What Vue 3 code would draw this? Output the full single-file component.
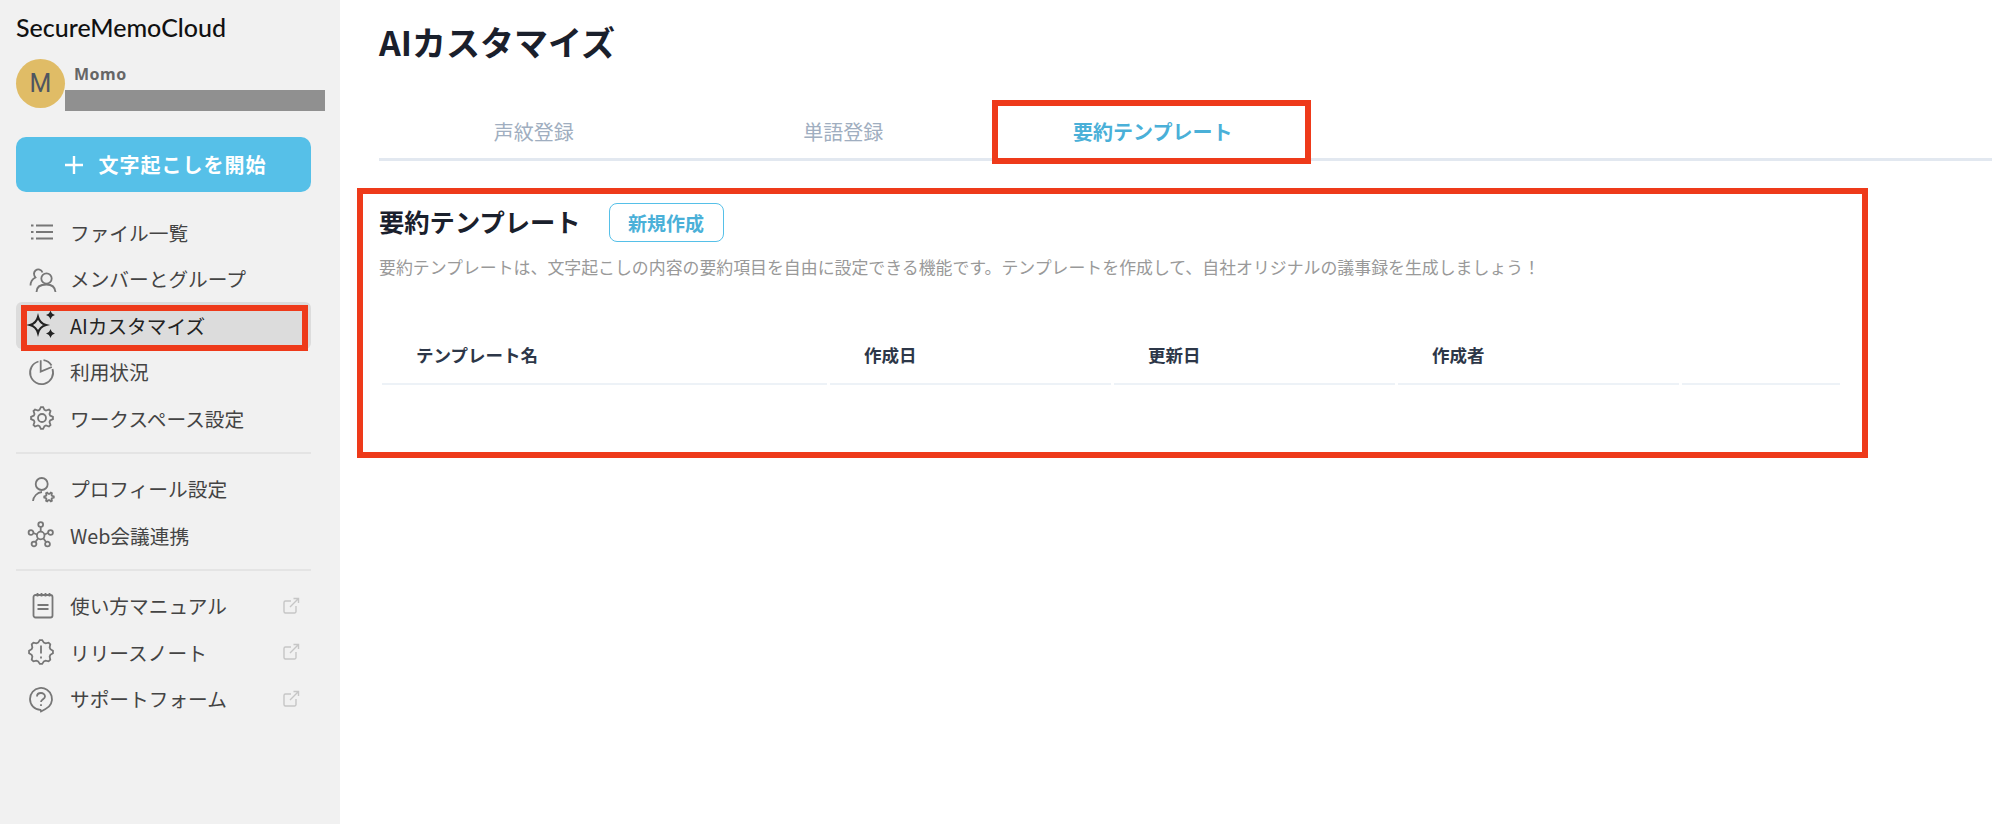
<template>
  <div class="page">
    <aside class="sidebar">
      <div class="logo">SecureMemoCloud</div>
      <div class="user">
        <div class="avatar">M</div>
        <div class="user-info">
          <div class="user-name">Momo</div>
          <div class="user-mail"></div>
        </div>
      </div>
      <button class="start-btn">
        <svg width="20" height="20" viewBox="0 0 20 20"><path d="M10 1v18M1 10h18" stroke="#fff" stroke-width="2.4" fill="none" /></svg>
        <span>文字起こしを開始</span>
      </button>

      <nav v-for="(group, i) in navGroups" :key="i" class="nav-group">
        <a v-for="item in group" :key="item.label" class="nav-item" :class="{ active: item.active }">
          <svg class="nav-icon" width="28" height="28" viewBox="0 0 28 28">
            <path v-for="d in item.icon" :key="d" :d="d" />
            <path v-for="d in item.dark || []" :key="d" :d="d" class="dark" />
            <path v-for="d in item.solid || []" :key="d" :d="d" class="solid" />
          </svg>
          <span class="nav-label">{{ item.label }}</span>
          <svg v-if="item.external" class="ext-icon" width="18" height="18" viewBox="0 0 18 18">
            <path d="M9 4H3.500A1.500 1.500 0 0 0 2 5.500V14.500A1.500 1.500 0 0 0 3.500 16H12.500A1.500 1.500 0 0 0 14 14.500V9M8 10L16.500 1.500M11.500 1.500H16.500V6" />
          </svg>
        </a>
      </nav>
    </aside>

    <main class="main">
      <h1 class="title">AIカスタマイズ</h1>

      <div class="tabs">
        <div v-for="tab in tabs" :key="tab" class="tab" :class="{ current: tab === currentTab }">{{ tab }}</div>
      </div>

      <section class="panel">
        <div class="panel-head">
          <h2>要約テンプレート</h2>
          <button class="new-btn">新規作成</button>
        </div>
        <p class="desc">要約テンプレートは、文字起こしの内容の要約項目を自由に設定できる機能です。テンプレートを作成して、自社オリジナルの議事録を生成しましょう！</p>
        <div class="table-head">
          <div v-for="col in columns" :key="col" class="th">{{ col }}</div>
        </div>
      </section>
    </main>
  </div>
</template>

<script setup>
// 歯車・バッジのギザギザを計算で作る
function burst(cx, cy, outer, inner, count) {
  let d = ''
  const total = count * 4
  for (let i = 0; i < total; i++) {
    const r = i % 4 === 0 || i % 4 === 1 ? outer : inner
    const a = ((i - 0.5) / total) * Math.PI * 2
    d += (i === 0 ? 'M' : 'L') + (cx + r * Math.cos(a)).toFixed(2) + ' ' + (cy + r * Math.sin(a)).toFixed(2)
  }
  return d + 'Z'
}

function circle(cx, cy, r) {
  return `M${cx - r} ${cy}a${r} ${r} 0 1 0 ${r * 2} 0a${r} ${r} 0 1 0 ${-r * 2} 0Z`
}

function star(cx, cy, r) {
  const k = r * 0.22
  return `M${cx} ${cy - r}Q${cx + k} ${cy - k} ${cx + r} ${cy}Q${cx + k} ${cy + k} ${cx} ${cy + r}Q${cx - k} ${cy + k} ${cx - r} ${cy}Q${cx - k} ${cy - k} ${cx} ${cy - r}Z`
}

const navGroups = [
  [
    {
      label: 'ファイル一覧',
      icon: ['M9 7.500H26M9 14H26M9 20.500H26', 'M4 7.500H6.500M4 14H6.500M4 20.500H6.500'],
    },
    {
      label: 'メンバーとグループ',
      icon: [
        circle(19.5, 13.5, 5.2),
        'M9.500 27C9.500 22 13.500 19.500 19.500 19.500S28 22 28.500 27',
        'M15.500 7.500C14.500 4.500 11 3.500 8.500 5.500C6.500 7.500 7 10.500 8.500 12.500C5.500 14 3.500 17 3.500 20.500',
      ],
    },
    {
      label: 'AIカスタマイズ',
      active: true,
      icon: [],
      dark: [star(11, 14, 8)],
      solid: [star(23.500, 4, 4.500), star(23.500, 22.500, 4.500)],
    },
    {
      label: '利用状況',
      icon: [
        'M11.500 3.500A11.500 11.500 0 1 0 25.500 11',
        'M13.700 2.200V13.700L24.800 9',
        'M16.500 2.200A11.500 11.500 0 0 1 24.500 7.500',
      ],
    },
    {
      label: 'ワークスペース設定',
      icon: [burst(15, 14, 11, 8.500, 8), circle(15, 14, 4)],
    },
  ],
  [
    {
      label: 'プロフィール設定',
      icon: [circle(14.700, 9, 6), 'M6 26C6.500 21.500 10 17.500 15 17', burst(22, 22, 4.800, 3.200, 6)],
    },
    {
      label: 'Web会議連携',
      icon: [
        circle(13.700, 14.500, 3.800),
        circle(13.700, 3.500, 2.400),
        circle(4, 11.500, 2.400),
        circle(23.500, 11.500, 2.400),
        circle(7, 23, 2.400),
        circle(20.500, 23, 2.400),
        'M13.700 6V10.700M6.300 12L10 13.500M21 12L17.500 13.500M8.400 21L11 17.500M19 21L16.500 17.500',
      ],
    },
  ],
  [
    {
      label: '使い方マニュアル',
      external: true,
      icon: [
        'M8.500 3H23.500A2 2 0 0 1 25.500 5V23.500A2 2 0 0 1 23.500 25.500H8.500A2 2 0 0 1 6.500 23.500V5A2 2 0 0 1 8.500 3Z',
        'M10.500 1V4.500M14.500 1V4.500M18.500 1V4.500M22.500 1V4.500',
        'M10.500 13H21.500M10.500 17H21.500',
      ],
    },
    {
      label: 'リリースノート',
      external: true,
      icon: [burst(14, 14, 12, 9.800, 8), 'M14 7.500V15.500', 'M14 18.500V20.500'],
    },
    {
      label: 'サポートフォーム',
      external: true,
      icon: [
        'M14 26.500L13.500 24.800C7.500 24.500 3 20 3 14A11 11 0 1 1 18.500 24L14 26.500Z',
        'M10 11.500C10 9 12 8 14 8S18 9.500 18 11.500C18 14 14 14.500 14 17',
        'M14 19.200V21',
      ],
    },
  ],
]

const tabs = ['声紋登録', '単語登録', '要約テンプレート']
const currentTab = '要約テンプレート'
const columns = ['テンプレート名', '作成日', '更新日', '作成者', '']
</script>

<style>
html,
body {
  margin: 0;
  background: #fff;
}
</style>

<style scoped>
.page {
  display: flex;
  min-height: 824px;
  font-family: "Noto Sans CJK JP", "Noto Sans", sans-serif;
  color: #1a1a1a;
}

.sidebar {
  width: 340px;
  flex-shrink: 0;
  box-sizing: border-box;
  background: #f1f1f1;
  padding: 12px 29px 0 16px;
}

.logo {
  font-family: Lato, "Noto Sans", sans-serif;
  font-size: 25px;
  font-weight: 500;
  line-height: 30px;
  color: #111;
}

.user {
  display: flex;
  margin-top: 17px;
  height: 49px;
}

.avatar {
  width: 49px;
  height: 49px;
  border-radius: 50%;
  background: #e0bc66;
  color: #4f5560;
  font-family: Roboto, sans-serif;
  font-size: 25px;
  line-height: 49px;
  text-align: center;
  flex-shrink: 0;
}

.user-info {
  flex: 1;
  margin-right: -14px;
}

.user-name {
  margin-left: 9px;
  font-family: "Noto Sans", sans-serif;
  font-size: 16px;
  font-weight: 700;
  line-height: 20px;
  margin-top: 5px;
  letter-spacing: 0.5px;
  color: #666;
}

.user-mail {
  margin-top: 6px;
  height: 21px;
  background: #909090;
}

.start-btn {
  display: flex;
  align-items: center;
  justify-content: center;
  gap: 15px;
  width: 100%;
  height: 55px;
  margin-top: 29px;
  padding: 0 0 0 3px;
  border: none;
  border-radius: 10px;
  background: #56c0e8;
  color: #fff;
  font-family: inherit;
  font-size: 20px;
  font-weight: 700;
  letter-spacing: 1px;
}

.nav-group {
  margin-top: 17px;
  padding-bottom: 10px;
  border-bottom: 2px solid #e4e4e4;
}

.nav-group + .nav-group {
  margin-top: 12px;
}

.nav-group:last-child {
  border-bottom: none;
}

.nav-item {
  position: relative;
  display: flex;
  align-items: center;
  height: 46.5px;
  padding-left: 11px;
  font-size: 19.7px;
  color: #444;
  border-radius: 6px;
}

.nav-item.active {
  background: #dcdcdc;
  color: #222;
}

/* 赤い注釈枠 */
.nav-item.active::after {
  content: "";
  position: absolute;
  left: 5px;
  right: 3px;
  top: 3px;
  bottom: -2px;
  border: 6px solid #ee3a1a;
  pointer-events: none;
}

.nav-icon {
  flex-shrink: 0;
  margin-right: 15px;
  fill: none;
  stroke: #777;
  stroke-width: 1.800;
  overflow: visible;
}

.nav-icon .dark {
  stroke: #222;
  stroke-width: 2.200;
}

.nav-icon .solid {
  fill: #222;
  stroke: none;
}

.nav-label {
  flex: 1;
  white-space: nowrap;
}

.ext-icon {
  margin-right: 11px;
  fill: none;
  stroke: #c6c6c6;
  stroke-width: 1.400;
}

.main {
  flex: 1;
  min-width: 0;
  padding: 0 0 0 17px;
}

.title {
  margin: 0;
  padding: 16px 0 0 22px;
  font-size: 34px;
  font-weight: 700;
  line-height: 52px;
  color: #1a202c;
}

.tabs {
  display: flex;
  margin: 32px 0 0 22px;
  height: 58px;
  border-bottom: 3px solid #e2e8f0;
}

.tab {
  position: relative;
  width: 309.500px;
  height: 58px;
  box-sizing: border-box;
  padding-top: 19px;
  line-height: 26px;
  text-align: center;
  font-size: 20px;
  font-weight: 400;
  color: #a0aec0;
}

.tab.current {
  color: #4ab0d8;
  font-weight: 700;
}

/* 赤い注釈枠 */
.tab.current::after {
  content: "";
  position: absolute;
  left: -6px;
  right: -3px;
  top: 0;
  bottom: -6px;
  border: 6px solid #ee3a1a;
  pointer-events: none;
}

.panel {
  box-sizing: border-box;
  width: 1511px;
  height: 270px;
  margin-top: 27px;
  padding: 8px 16px 0;
  border: 6px solid #ee3a1a;
}

.panel-head {
  display: flex;
  align-items: center;
  gap: 28px;
}

.panel-head h2 {
  margin: 0 0 2px;
  font-size: 25.300px;
  font-weight: 700;
  line-height: 38px;
  color: #1a202c;
}

.new-btn {
  width: 115px;
  height: 39px;
  margin-top: 1px;
  padding: 0;
  border: 1px solid #56c0e8;
  border-radius: 8px;
  background: #fff;
  color: #4ab0d8;
  font-family: inherit;
  font-size: 19px;
  font-weight: 700;
}

.desc {
  margin: 13px 0 0;
  font-size: 16.900px;
  line-height: 24px;
  color: #999;
  white-space: nowrap;
}

.table-head {
  display: grid;
  grid-template-columns: 445px 281px 281px 281px 158px;
  gap: 3px;
  margin: 46px 0 0 3px;
}

.th {
  height: 60px;
  padding-left: 34px;
  box-sizing: border-box;
  line-height: 60px;
  font-size: 17.500px;
  font-weight: 700;
  color: #2d3748;
  border-bottom: 2px solid #edf2f7;
}
</style>
